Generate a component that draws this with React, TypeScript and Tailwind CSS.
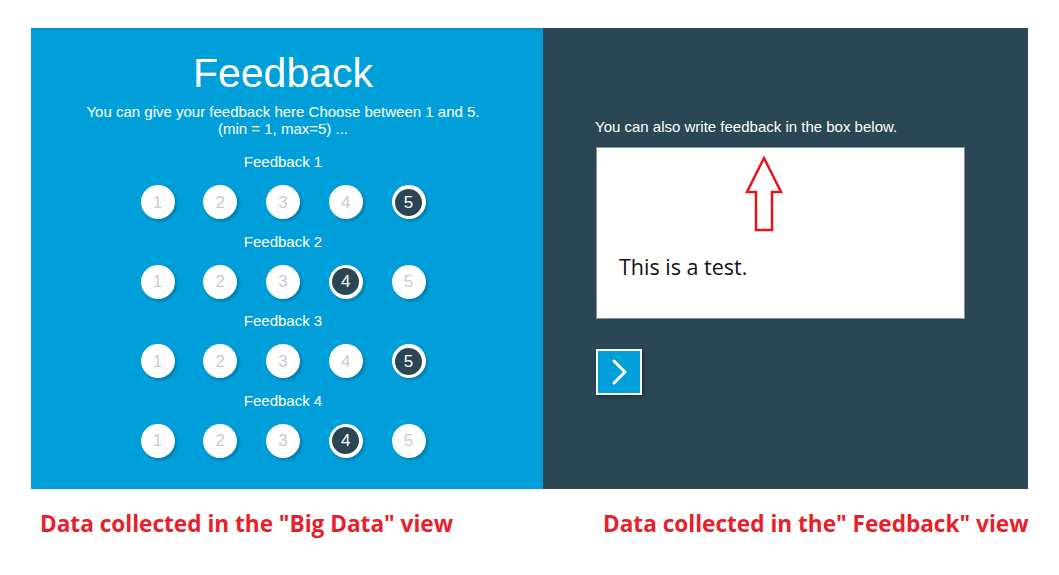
import React from "react";

const rows = [
  { label: "Feedback 1", sel: 5 },
  { label: "Feedback 2", sel: 4 },
  { label: "Feedback 3", sel: 5 },
  { label: "Feedback 4", sel: 4 },
];

function Circle({ n, selected }: { n: number; selected: boolean }) {
  if (selected) {
    return (
      <div className="w-[34px] h-[34px] rounded-full bg-white flex items-center justify-center shadow-[2px_2px_3px_rgba(0,0,0,0.22)]">
        <div className="w-[27px] h-[27px] rounded-full bg-[#2a4654] flex items-center justify-center text-white text-[17px] leading-none">
          {n}
        </div>
      </div>
    );
  }
  return (
    <div className="w-[34px] h-[34px] rounded-full bg-white flex items-center justify-center text-[#c5ccd4] text-[17px] leading-none shadow-[2px_2px_3px_rgba(0,0,0,0.22)]">
      {n}
    </div>
  );
}

export default function App() {
  return (
    <div className="w-[1059px] h-[575px] bg-white relative overflow-hidden" style={{ fontFamily: '"Liberation Sans", Arial, sans-serif' }}>
      <div className="flex pl-[31px] pt-[28px]">
        {/* Left blue panel */}
        <div className="w-[512px] h-[461px] bg-[#009fd9] border-t-2 border-[#0292c9] flex flex-col items-center pt-[19px] pr-[8px] text-white">
          <div className="text-[41px] leading-[48px]">Feedback</div>
          <div className="mt-[6px] text-[15px] leading-[17px] text-center">
            You can give your feedback here Choose between 1 and 5.
            <br />
            (min = 1, max=5) ...
          </div>
          <div className="mt-[16px] flex flex-col items-center">
            {rows.map((r, i) => (
              <div key={i} className={"flex flex-col items-center " + (i > 0 ? "mt-[13.5px]" : "")}>
                <div className="text-[15px] leading-[17px]">{r.label}</div>
                <div className="mt-[15px] flex gap-[28.75px]">
                  {[1, 2, 3, 4, 5].map((n) => (
                    <Circle key={n} n={n} selected={n === r.sel} />
                  ))}
                </div>
              </div>
            ))}
          </div>
        </div>
        {/* Right dark panel */}
        <div className="w-[485px] h-[461px] bg-[#2b4755] pl-[52px] pt-[91px]">
          <div className="text-white text-[15px] leading-[16px]">You can also write feedback in the box below.</div>
          <div className="relative mt-[12px] ml-[1px] w-[369px] h-[172px] bg-white border border-[#8a8f93]">
            <svg className="absolute left-[147px] top-[8px]" width="40" height="78" viewBox="0 0 40 78">
              <path d="M20 2 L37 36 L28 36 L28 74 L12 74 L12 36 L3 36 Z" fill="none" stroke="#e8141c" strokeWidth="2.5" strokeLinejoin="miter" />
            </svg>
            <div
              className="absolute left-[22px] top-[105px] text-[21.5px] leading-[28px] text-[#111]"
              style={{ fontFamily: '"Open Sans", "Noto Sans", sans-serif' }}
            >
              This is a test.
            </div>
          </div>
          <div className="mt-[30px] ml-[1px] w-[46px] h-[46px] bg-[#009fd9] border-2 border-white shadow-[2px_2px_4px_rgba(0,0,0,0.35)] flex items-center justify-center">
            <svg width="22" height="30" viewBox="0 0 22 30">
              <path d="M6 4 L17 15 L6 26" fill="none" stroke="white" strokeWidth="3" strokeLinecap="round" strokeLinejoin="round" />
            </svg>
          </div>
        </div>
      </div>
      <div
        className="flex mt-[21px] text-[#e8202a] font-bold text-[22.6px] leading-[28px]"
        style={{ fontFamily: '"Open Sans", "Noto Sans", sans-serif' }}
      >
        <div className="pl-[40px] w-[603px]">Data collected in the "Big Data" view</div>
        <div>Data collected in the" Feedback" view</div>
      </div>
    </div>
  );
}
